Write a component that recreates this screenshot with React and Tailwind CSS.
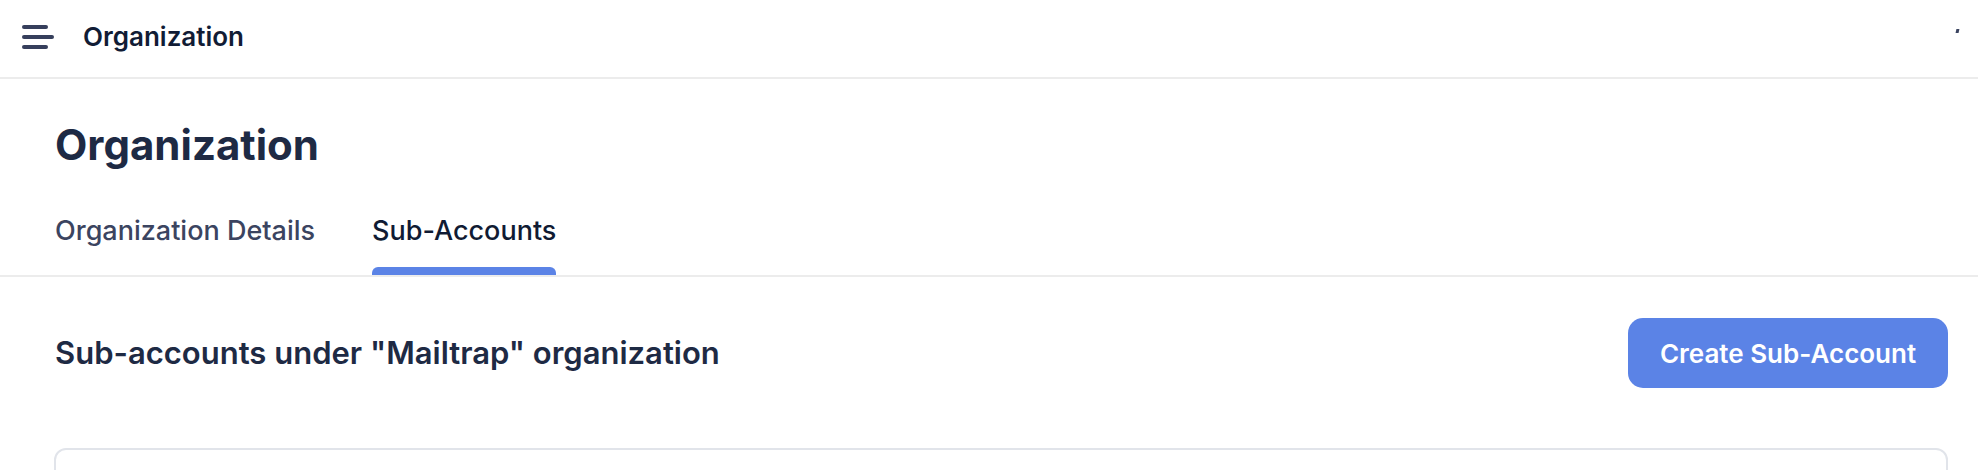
import React from "react";

const tabs = [
  { label: "Organization Details", active: false },
  { label: "Sub-Accounts", active: true },
];

const App = () => {
  return (
    <div className="min-h-screen bg-white font-['Inter',sans-serif] text-[#1e2a44]">
      {/* Top bar */}
      <header className="h-[79px] flex items-center justify-between border-b-2 border-[#ececec] pl-[22px] pr-[19px] pb-[4px]">
        <div className="flex items-center">
          <svg width="32" height="26" viewBox="0 0 32 26" className="text-[#363f5c]">
            <line x1="2" y1="3" x2="24" y2="3" stroke="currentColor" strokeWidth="4" strokeLinecap="round" />
            <line x1="2" y1="13" x2="30" y2="13" stroke="currentColor" strokeWidth="4" strokeLinecap="round" />
            <line x1="2" y1="23" x2="24" y2="23" stroke="currentColor" strokeWidth="4" strokeLinecap="round" />
          </svg>
          <span className="ml-[29px] text-[26px] font-semibold text-[#111c35]">
            Organization
          </span>
        </div>
        <span className="block w-[3px] h-[4px] bg-[#3b4460] -skew-x-12 mt-[-12px]" />
      </header>

      {/* Page title */}
      <div className="pl-[55px] pt-[41px]">
        <h1 className="text-[42px] leading-[50px] font-bold text-[#1e2a44]">
          Organization
        </h1>
      </div>

      {/* Tabs */}
      <nav className="mt-[41px] flex gap-[57px] pl-[55px] border-b-2 border-[#ececec]">
        {tabs.map((tab) => (
          <button key={tab.label} className="flex flex-col">
            <span
              className={`text-[27px] leading-[39px] font-medium ${
                tab.active ? "text-[#101b33]" : "text-[#3b4460]"
              }`}
            >
              {tab.label}
            </span>
            <span
              className={`mt-[17px] h-[8px] rounded-t-[6px] ${
                tab.active ? "bg-[#5b83e6]" : "bg-transparent"
              }`}
            />
          </button>
        ))}
      </nav>

      {/* Section header */}
      <div className="pl-[55px] pr-[30px] pt-[41px] flex items-center justify-between">
        <h2 className="text-[31px] leading-[40px] font-semibold text-[#1e2a44]">
          Sub-accounts under "Mailtrap" organization
        </h2>
        <button className="w-[320px] h-[70px] rounded-[15px] bg-[#5b83e6] text-white text-[26px] font-semibold">
          Create Sub-Account
        </button>
      </div>

      {/* Card */}
      <div className="pl-[54px] pr-[30px] pt-[60px]">
        <div className="h-[60px] rounded-[12px] border-2 border-[#e1e4ea] bg-white" />
      </div>
    </div>
  );
};

export default App;
